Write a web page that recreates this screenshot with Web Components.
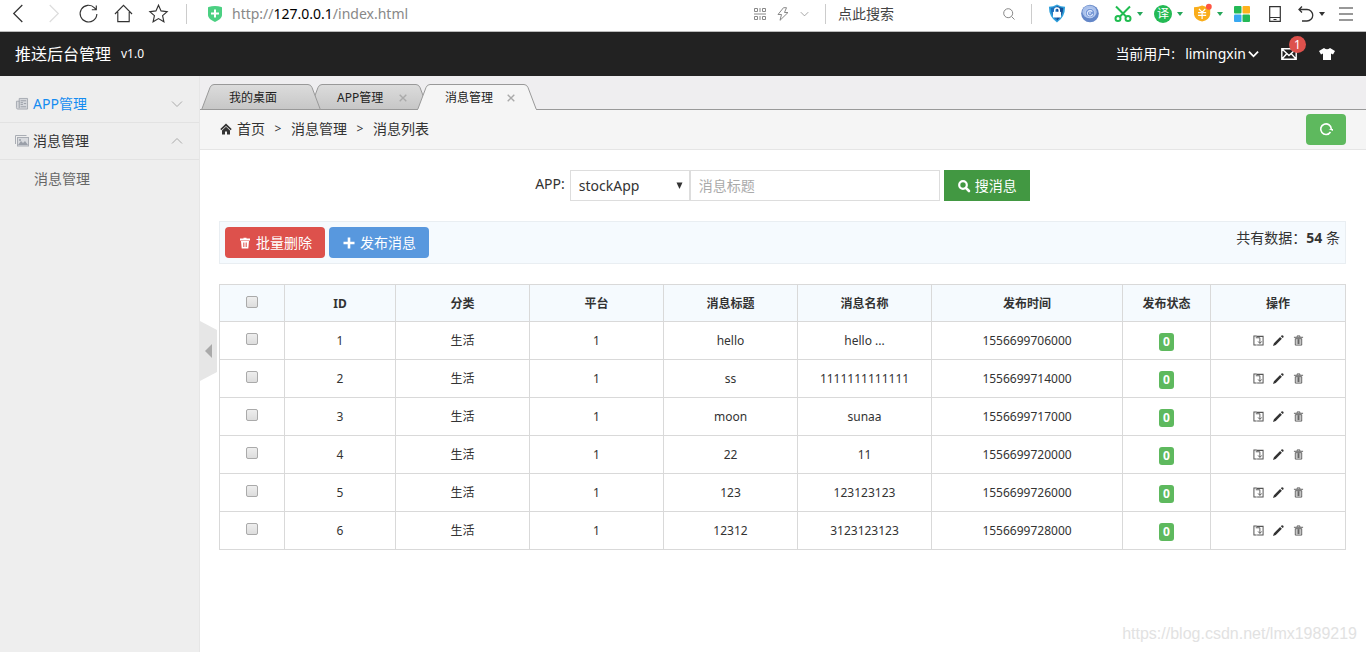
<!DOCTYPE html>
<html lang="zh-CN">
<head>
<meta charset="utf-8">
<title>推送后台管理 v1.0</title>
<style>
html,body{margin:0;padding:0}
body{font:14px/20px "Noto Sans","Noto Sans CJK SC",sans-serif;color:#333;background:#fff}
</style>
</head>
<body>
<push-admin></push-admin>
<script>
const ICONS = {
  back: ['0 0 16 20', '<path d="M12 1L3 10l9 9" fill="none" stroke="currentColor" stroke-width="1.3"/>'],
  forward: ['0 0 16 20', '<path d="M4 1l9 9-9 9" fill="none" stroke="currentColor" stroke-width="1.3"/>'],
  reload: ['0 0 20 20', '<path d="M18.8 10.500a8.800 8.800 0 1 1-2.500-6.500l1.800 2M18.200 1.500V6h-4.700" fill="none" stroke="currentColor" stroke-width="1.200"/>'],
  home: ['0 0 20 20', '<path d="M1 10.500L10 1.500l9 9M4 8.500v10h12v-10" fill="none" stroke="currentColor" stroke-width="1.200"/>'],
  star: ['0 0 20 20', '<path d="M10 1.300l2.700 6 6.400.700-4.800 4.300 1.400 6.400L10 15.400l-5.700 3.300 1.400-6.400L.900 8l6.400-.700z" fill="none" stroke="currentColor" stroke-width="1.200"/>'],
  safe: ['0 0 16 18', '<path d="M1.500 2Q8 0 14.500 2q.500 0 .500 1v7c0 3-3 5-7 7-4-2-7-4-7-7V3q0-1 .500-1z" fill="#4bd082"/><path d="M8 4.500v8M4 8.500h8" stroke="#fff" stroke-width="2"/>'],
  qr: ['0 0 12 12', '<path d="M.5.5h3v3h-3zM8.500.5h3v3h-3zM.5 8.500h3v3h-3zM8.500 8.500h3v3h-3zM0 6h12M6 0v4M6 8v4" fill="none" stroke="currentColor"/>'],
  bolt: ['0 0 12 14', '<path d="M6.500.700L1 7.500h3.500L3 13.300 11 5.500H7.500L9.500.700z" fill="none" stroke="currentColor" stroke-linejoin="round"/>'],
  down: ['0 0 12 8', '<path d="M1 1.500l5 5 5-5" fill="none" stroke="currentColor" stroke-width="var(--stroke,1)"/>'],
  up: ['0 0 12 8', '<path d="M1 6.500l5-5 5 5" fill="none" stroke="currentColor" stroke-width="var(--stroke,1)"/>'],
  find: ['0 0 12 12', '<circle cx="5.200" cy="5.200" r="4.500" fill="none" stroke="currentColor"/><path d="M8.500 8.500l3 3" stroke="currentColor"/>'],
  lockshield: ['0 0 20 20', '<path d="M10 0Q14 2.500 19 2.500 19 14 10 20 1 14 1 2.500 6 2.500 10 0z" fill="#2fa1dc"/><path d="M10 1.800Q13 3.700 17 4 16.500 13.500 10 18z" fill="#134f97"/><path d="M10 1.800Q7 3.700 3 4 3.500 13.500 10 18z" fill="#1b70bd"/><path d="M7.500 9V6.500a2.500 2.500 0 0 1 5 0V9" fill="none" stroke="#fff" stroke-width="1.700"/><rect x="5.500" y="8" width="9" height="6.500" rx="1" fill="#fff"/>'],
  orb: ['0 0 20 20', '<circle cx="10" cy="10" r="9.800" fill="#6487c8"/><ellipse cx="9.500" cy="8" rx="8" ry="7" fill="#a9c0ea"/><circle cx="10" cy="9.500" r="5.300" fill="#7799d8" stroke="#c4d5f4"/><path d="M12.500 8a3 3 0 1 0 .5 2.500M10 8v2.500" fill="none" stroke="#e4edff" stroke-width="1.200"/>'],
  scissors: ['0 0 18 18', '<g fill="none" stroke="#20bd50" stroke-width="2"><path d="M2 2l10.500 10.500M16 2L5.500 12.500"/><circle cx="4" cy="14" r="2.500"/><circle cx="14" cy="14" r="2.500"/></g>'],
  yen: ['0 0 20 20', '<path d="M9 1q4 2 9 2v8q-1 6-9 8-8-2-9-8V3q5 0 9-2z" fill="#f9ad1b"/><path d="M5.500 5L9 8.500 12.500 5M4.500 9h9M4.500 12h9M9 8.500v7.500" fill="none" stroke="#fff" stroke-width="1.300"/><circle cx="16.500" cy="2.500" r="3.200" fill="#ff5542"/>'],
  grid: ['0 0 16 16', '<rect width="7.500" height="7.500" rx="1" fill="#24b956"/><rect x="8.500" width="7.500" height="7.500" rx="1" fill="#ffb21c"/><rect y="8.500" width="7.500" height="7.500" rx="1" fill="#38a8f1"/><rect x="8.500" y="8.500" width="7.500" height="7.500" rx="1" fill="#24b956"/>'],
  phone: ['0 0 12 16', '<path d="M.7.7h10.600v14.600H.7zM1 11.500h10M4.500 13.500h3" fill="none" stroke="currentColor" stroke-width="1.200"/>'],
  undo: ['0 0 16 16', '<path d="M4 .5L1 3.500l3 3M1 3.500h8a5.700 5.700 0 0 1 0 11.500H4" fill="none" stroke="currentColor" stroke-width="1.300"/>'],
  menu: ['0 0 14 14', '<path d="M0 1h14M0 7h14M0 13h14" stroke="currentColor" stroke-width="1.200"/>'],
  caret: ['0 0 6 4', '<path d="M0 0h6L3 4z" fill="currentColor"/>'],
  dropdown: ['0 0 7 7', '<path d="M.5.5h6L3.500 7z" fill="currentColor"/>'],
  mail: ['0 0 16 12', '<path d="M.8.800h14.400v10.400H.8zM1 1l7 6.500L15 1M1 11l4.500-5M15 11l-4.500-5" fill="none" stroke="currentColor" stroke-width="1.400"/>'],
  shirt: ['0 0 16 12', '<path d="M5 0Q8 2.500 11 0l5 3-2 3.500-2-1V12H4V5.500l-2 1L0 3z" fill="currentColor"/>'],
  news: ['0 0 13 13', '<path d="M3.500.5h9v11.500H2Q.5 12 .5 10.500V3.500h3z" fill="#d5d7db" stroke="#a4a8b0"/><path d="M3.500 3v8M5 3h6M5 5h2.500M5 7h2.500M5 9.500h6M8.500 6h2.500" stroke="#979ca5"/>'],
  picture: ['0 0 14 12', '<path d="M.5 9V.5h11" fill="none" stroke="#a9adb4"/><rect x="2.500" y="2.500" width="11" height="8.500" fill="#d8dade" stroke="#a9adb4"/><path d="M3 10l3-4 2 2 2-2 3 4z" fill="#9a9fa8"/><circle cx="5" cy="5" r="1" fill="#9a9fa8"/>'],
  house: ['0 0 12 12', '<path d="M6 .5L.3 6l1 1.200L6 2.900l4.700 4.300 1-1.200z" fill="currentColor"/><path d="M2 7.500l4-3.700 4 3.700V11.500H7V8.500H5v3H2z" fill="currentColor"/>'],
  refresh: ['0 0 14 14', '<path d="M11.500 10A5.300 5.300 0 1 1 12.300 7" fill="none" stroke="currentColor" stroke-width="1.600"/><path d="M9.500 7H14v2z" fill="currentColor"/>'],
  search: ['0 0 12 12', '<circle cx="5" cy="5" r="3.800" fill="none" stroke="currentColor" stroke-width="2.200"/><path d="M7.800 7.800L11 11" stroke="currentColor" stroke-width="2.600" stroke-linecap="round"/>'],
  bin: ['0 0 12 12', '<path d="M4.500 1.500V.7h3v.8H11v2H1v-2zM2 4h8l-.7 7.500H2.700z" fill="currentColor"/><path d="M4.500 5.500v4.500M6 5.500v4.500M7.500 5.500v4.500" stroke="#dd514c" stroke-width=".7"/>'],
  plus: ['0 0 12 12', '<path d="M6 .5v11M.5 6h11" stroke="currentColor" stroke-width="2.600"/>'],
  unpublish: ['0 0 12 12', '<path d="M4 1H1v10h3M4 1.500h7v9.500H4.500" fill="none" stroke="#555" stroke-width="1.100"/><path d="M3 3h4.500v6M5.500 7l2 2.200 2-2.200" fill="none" stroke="#555"/>'],
  pencil: ['0 0 12 12', '<path d="M0 12l1-3L7.700 2.200l2 2L3 11zM8.500 1.400L9.700.200q2-.2 2 2L10.500 3.400z" fill="currentColor"/>'],
  trash: ['0 0 12 12', '<path d="M4.500 2V1h3v1M1 2.500h10M2.500 4v7h7V4zM4.500 4.500v5.500M6 4.500v5.500M7.500 4.500v5.500" fill="none" stroke="#444" stroke-width=".9"/>'],
  arrowleft: ['0 0 7 14', '<path d="M7 0v14L0 7z" fill="currentColor"/>'],
  close: ['0 0 8 8', '<path d="M.7.700l6.600 6.600M7.300.700L.7 7.300" stroke="currentColor" stroke-width="1.400"/>']
};

function define(name, html, setup) {
  const template = document.createElement('template');
  template.innerHTML = '<style>*{box-sizing:border-box}button{font:inherit;color:inherit;border:0;padding:0;margin:0;background:none;cursor:pointer}a{color:inherit;text-decoration:none}</style>' + html;
  customElements.define(name, class extends HTMLElement {
    constructor() {
      super();
      this.attachShadow({mode: 'open'}).append(template.content.cloneNode(true));
    }
    connectedCallback() { if (setup) setup(this, this.shadowRoot); }
  });
}

define('ui-icon', '<style>:host{display:inline-block;flex:none;width:12px;height:12px}svg{display:block;width:100%;height:100%;overflow:visible}</style><svg aria-hidden="true"></svg>', (el, root) => {
  const [box, body] = ICONS[el.getAttribute('name')];
  const svg = root.querySelector('svg');
  svg.setAttribute('viewBox', box);
  svg.innerHTML = body;
});

define('browser-bar', `
<style>
:host{display:flex;align-items:center;height:32px;padding:0 13px 4px 9px;border-bottom:1px solid #bbb;background:#fff;color:#333}
button{display:flex;align-items:center}
.nav{display:flex;gap:16px}
.nav ui-icon{width:19px;height:19px}
.sep{width:1px;height:20px;background:#ccc}
.nav+.sep{margin:0 20px 0 18px}
.safe{width:16px;height:18px}
.url{flex:1;margin-left:9px;font-size:14px;color:#888}
.url b{font-weight:400;color:#000}
.tools{display:flex;align-items:center;gap:11px;margin-right:16px;color:#888}
.tools .bolt{height:14px}
.down{width:9px;height:6px}
.search{display:flex;align-items:center;justify-content:space-between;width:205px;padding:0 16px 0 12px;color:#888}
input{width:120px;border:0;padding:0;outline:0;font:inherit;color:#444;background:none}
input::placeholder{color:#444;opacity:1}
.ext{display:flex;align-items:center;gap:11px;margin-left:16px}
.wide{margin-right:4px}
.pair{display:flex;align-items:center;gap:5px}
.caret{width:6px;height:4px;color:#25a75a}
.dark{color:#333}
.e{width:18px;height:19px}
.apps{width:16px;height:16px}
.phone{height:16px;margin:0 6px 0 8px}
.menu{width:14px;height:14px;margin-left:3px}
.tr{display:grid;place-items:center;width:18px;height:18px;border-radius:50%;background:#24ba54;color:#fff;font-size:12px;line-height:18px}
</style>
<nav class="nav"><button aria-label="后退"><ui-icon name="back"></ui-icon></button><button aria-label="前进" style="color:#ddd"><ui-icon name="forward"></ui-icon></button><button aria-label="刷新"><ui-icon name="reload"></ui-icon></button><button aria-label="主页"><ui-icon name="home"></ui-icon></button><button aria-label="收藏"><ui-icon name="star"></ui-icon></button></nav>
<span class="sep"></span>
<ui-icon class="safe" name="safe"></ui-icon>
<span class="url">http://<b>127.0.0.1</b>/index.html</span>
<div class="tools"><ui-icon name="qr"></ui-icon><ui-icon class="bolt" name="bolt"></ui-icon><ui-icon class="down" name="down"></ui-icon></div>
<span class="sep"></span>
<label class="search"><input aria-label="搜索" placeholder="点此搜索"><ui-icon name="find"></ui-icon></label>
<span class="sep"></span>
<div class="ext">
<button class="wide" aria-label="安全"><ui-icon class="e" name="lockshield"></ui-icon></button>
<button class="wide" aria-label="浏览"><ui-icon class="e" name="orb"></ui-icon></button>
<button class="pair" aria-label="截图"><ui-icon class="e" name="scissors"></ui-icon><ui-icon class="caret" name="caret"></ui-icon></button>
<button class="pair"><span class="tr">译</span><ui-icon class="caret" name="caret"></ui-icon></button>
<button class="pair" aria-label="支付"><ui-icon class="e" name="yen"></ui-icon><ui-icon class="caret" name="caret"></ui-icon></button>
<button aria-label="应用"><ui-icon class="apps" name="grid"></ui-icon></button>
<button aria-label="手机"><ui-icon class="phone" name="phone"></ui-icon></button>
<button class="pair" aria-label="恢复"><ui-icon class="apps" name="undo"></ui-icon><ui-icon class="caret dark" name="caret"></ui-icon></button>
<button aria-label="菜单"><ui-icon class="menu" name="menu"></ui-icon></button>
</div>`);

define('app-header', `
<style>
:host{display:flex;align-items:center;height:44px;padding:0 31px 0 15px;background:#222;color:#fff}
a{font-size:16px}
small{flex:1;margin-left:10px;font-size:12px}
button{display:flex;align-items:center}
.user{margin-left:10px;gap:2px}
.chev{width:11px;height:8px;--stroke:2}
.mail{position:relative;margin:0 22px}
.mail ui-icon,.skin ui-icon{width:16px}
.mail span{position:absolute;left:8px;top:-12px;width:17px;height:17px;border-radius:50%;background:#dd514c;font-size:12px;line-height:17px;text-align:center}
</style>
<a href="#">推送后台管理</a><small>v1.0</small>
<span>当前用户:</span><button class="user">limingxin<ui-icon class="chev" name="down"></ui-icon></button>
<button class="mail" aria-label="消息"><ui-icon name="mail"></ui-icon><span>1</span></button>
<button class="skin" aria-label="换肤"><ui-icon name="shirt"></ui-icon></button>`);

define('side-nav', `
<style>
:host{display:block;width:200px;flex:none;padding-top:10px;background:#eee;border-right:1px solid #e6e6e6}
button{display:flex;align-items:center;width:100%;height:37px;padding:0 16px 0 15px;border-bottom:1px solid #e2e2e2;text-align:left}
button span{flex:1;margin-left:4px}
button ui-icon:first-child{width:14px}
.arrow{height:8px;color:#aaa}
.on{color:#148cf1}
a{display:block;padding-left:34px;line-height:38px;color:#666}
</style>
<button class="on"><ui-icon name="news"></ui-icon><span>APP管理</span><ui-icon class="arrow" name="down"></ui-icon></button>
<button><ui-icon name="picture"></ui-icon><span>消息管理</span><ui-icon class="arrow" name="up"></ui-icon></button>
<a href="#">消息管理</a>`);

define('page-tab', `
<style>
:host{position:relative;display:flex;align-items:center;box-sizing:border-box;width:120px;height:26px;margin-right:-12px;padding:2px 22px 0 28px;font-size:12px;color:#222;--top:#dcdcdc;--bottom:#c6c6c6;z-index:1}
:host([behind]){z-index:0}
:host([active]){--top:#f5f5f5;--bottom:#f5f5f5;z-index:2}
svg{position:absolute;inset:0;width:120px;height:26px}
.base{stroke:#999}
:host([active]) .base{stroke:#f5f5f5}
a{position:relative;flex:1}
button{position:relative;display:none;color:#aaa}
:host([closable]) button{display:flex}
button ui-icon{width:8px;height:8px}
</style>
<svg viewBox="0 0 120 26" aria-hidden="true"><defs><linearGradient id="g" x2="0" y2="1"><stop style="stop-color:var(--top)"/><stop offset="1" style="stop-color:var(--bottom)"/></linearGradient></defs>
<path d="M.5 26L9 3.500Q10.200.5 13 .5h94q2.800 0 4 3L119.500 26" fill="url(#g)" stroke="#999"/><path class="base" d="M1 25.500h118"/></svg>
<a href="#"><slot></slot></a><button aria-label="关闭"><ui-icon name="close"></ui-icon></button>`);

define('tab-strip', `
<style>
:host{display:flex;box-sizing:border-box;height:34px;padding:8px 0 0 1px;background:#efeef0;box-shadow:inset 0 -1px #999}
</style><slot></slot>`);

define('crumb-bar', `
<style>
:host{display:flex;align-items:center;box-sizing:border-box;height:40px;padding:0 20px 1px;background:#f5f5f5;border-bottom:1px solid #e5e5e5}
nav{display:flex;align-items:center;flex:1}
i{width:26px;text-align:center;font-style:normal;font-size:12px}
nav ui-icon{margin-right:5px}
.refresh{display:grid;place-items:center;width:40px;height:31px;border-radius:4px;background:#5eb95e;color:#fff}
.refresh ui-icon{width:14px;height:14px}
</style>
<nav><ui-icon name="house"></ui-icon><a href="#">首页</a><i>&gt;</i><a href="#">消息管理</a><i>&gt;</i><span>消息列表</span></nav>
<button class="refresh" aria-label="刷新"><ui-icon name="refresh"></ui-icon></button>`);

define('ui-button', `
<style>
:host{display:block}
button{display:flex;align-items:center;gap:5px;height:31px;padding:0 13px 0 14px;color:#fff;background:var(--bg);border-radius:var(--radius,4px)}
</style>
<button><slot name="icon"></slot><span><slot></slot></span></button>`);

define('search-form', `
<style>
:host{display:block}
form{display:flex;justify-content:center;margin:0}
label{margin-right:5px;line-height:28px}
.select{display:grid;align-items:center;width:120px}
select,input{height:31px;border:1px solid #ddd;border-radius:0;background:#fff;font:inherit;color:#333;padding:0 8px;margin:0}
select{grid-area:1/1;appearance:none;width:100%}
.select ui-icon{grid-area:1/1;justify-self:end;margin-right:7px;width:7px;height:7px;pointer-events:none}
input{width:250px;margin-right:4px}
input::placeholder{color:#aaa;opacity:1}
ui-button{--bg:#429842;--radius:0}
</style>
<form><label for="app">APP:</label><span class="select"><select id="app"><option>stockApp</option></select><ui-icon name="dropdown"></ui-icon></span><input aria-label="消息标题" placeholder="消息标题"><ui-button><ui-icon slot="icon" name="search"></ui-icon>搜消息</ui-button></form>`);

define('action-bar', `
<style>
:host{display:flex;gap:4px;padding:5px;border:1px solid #e9eef2;background:#f5fafe}
p{margin:0 0 0 auto;line-height:22px}
</style>
<ui-button style="--bg:#dd514c"><ui-icon slot="icon" name="bin"></ui-icon>批量删除</ui-button>
<ui-button style="--bg:#5898de"><ui-icon slot="icon" name="plus"></ui-icon>发布消息</ui-button>
<p>共有数据：<strong>54</strong> 条</p>`);

define('message-table', `
<style>
:host{display:block;font-size:12px}
table{width:100%;table-layout:fixed;border-collapse:collapse;font-size:12px;line-height:18px}
th,td{height:38px;padding:0;border:1px solid #d9d9d9;text-align:center;vertical-align:middle}
th{height:37px;padding-top:2px;background:#f5fafe}
input{appearance:none;display:block;width:12px;height:12px;margin:0 auto 4px;border:1px solid #aaa;border-radius:2px;background:linear-gradient(#eee,#ddd)}
.badge{display:block;width:15px;height:18px;margin:3px auto 0;border-radius:3px;background:#5eb95e;color:#fff;font-weight:700;line-height:18px}
.ops{display:flex;justify-content:center;gap:9px}
.ops button{display:flex}
.ops ui-icon{width:11px;height:11px}
</style>
<table><colgroup><col style="width:65px"><col style="width:111px"><col style="width:134px"><col style="width:134px"><col style="width:134px"><col style="width:134px"><col style="width:191px"><col style="width:88px"><col style="width:135px"></colgroup>
<thead><tr><th><input type="checkbox" aria-label="全选"></th><th>ID</th><th>分类</th><th>平台</th><th>消息标题</th><th>消息名称</th><th>发布时间</th><th>发布状态</th><th>操作</th></tr></thead><tbody></tbody></table>`, (el, root) => {
  const rows = [
    ['hello', 'hello ...', '1556699706000'],
    ['ss', '1111111111111', '1556699714000'],
    ['moon', 'sunaa', '1556699717000'],
    ['22', '11', '1556699720000'],
    ['123', '123123123', '1556699726000'],
    ['12312', '3123123123', '1556699728000']
  ];
  root.querySelector('tbody').innerHTML = rows.map(([title, name, time], i) => `<tr><td><input type="checkbox" aria-label="选择 ${i + 1}"></td><td>${i + 1}</td><td>生活</td><td>1</td><td>${title}</td><td>${name}</td><td>${time}</td><td><span class="badge">0</span></td><td><div class="ops"><button aria-label="下架"><ui-icon name="unpublish"></ui-icon></button><button aria-label="编辑"><ui-icon name="pencil"></ui-icon></button><button aria-label="删除"><ui-icon name="trash"></ui-icon></button></div></td></tr>`).join('');
});

define('push-admin', `
<style>
:host{display:flex;flex-direction:column;min-height:100vh}
.body{display:flex;flex:1}
main{position:relative;flex:1;min-width:0;background:#fff}
.content{display:flex;flex-direction:column;gap:20px;padding:20px 20px 20px 19px}
.handle{position:absolute;left:0;top:calc(50% - 43px);width:17px;height:60px;padding-left:5px;background:#e6e6e6;color:#aaa;clip-path:polygon(0 0,100% 15%,100% 85%,0 100%)}
.handle ui-icon{display:block;width:7px;height:14px}
.mark{position:absolute;right:9px;bottom:8px;font:16px/20px "Liberation Sans",sans-serif;color:#e2e2e2}
</style>
<browser-bar></browser-bar>
<app-header></app-header>
<div class="body">
<side-nav></side-nav>
<main>
<tab-strip><page-tab>我的桌面</page-tab><page-tab behind closable>APP管理</page-tab><page-tab active closable>消息管理</page-tab></tab-strip>
<crumb-bar></crumb-bar>
<div class="content"><search-form></search-form><action-bar></action-bar><message-table></message-table></div>
<button class="handle" aria-label="收起菜单"><ui-icon name="arrowleft"></ui-icon></button>
<span class="mark">https://blog.csdn.net/lmx1989219</span>
</main>
</div>`);
</script>
</body>
</html>
